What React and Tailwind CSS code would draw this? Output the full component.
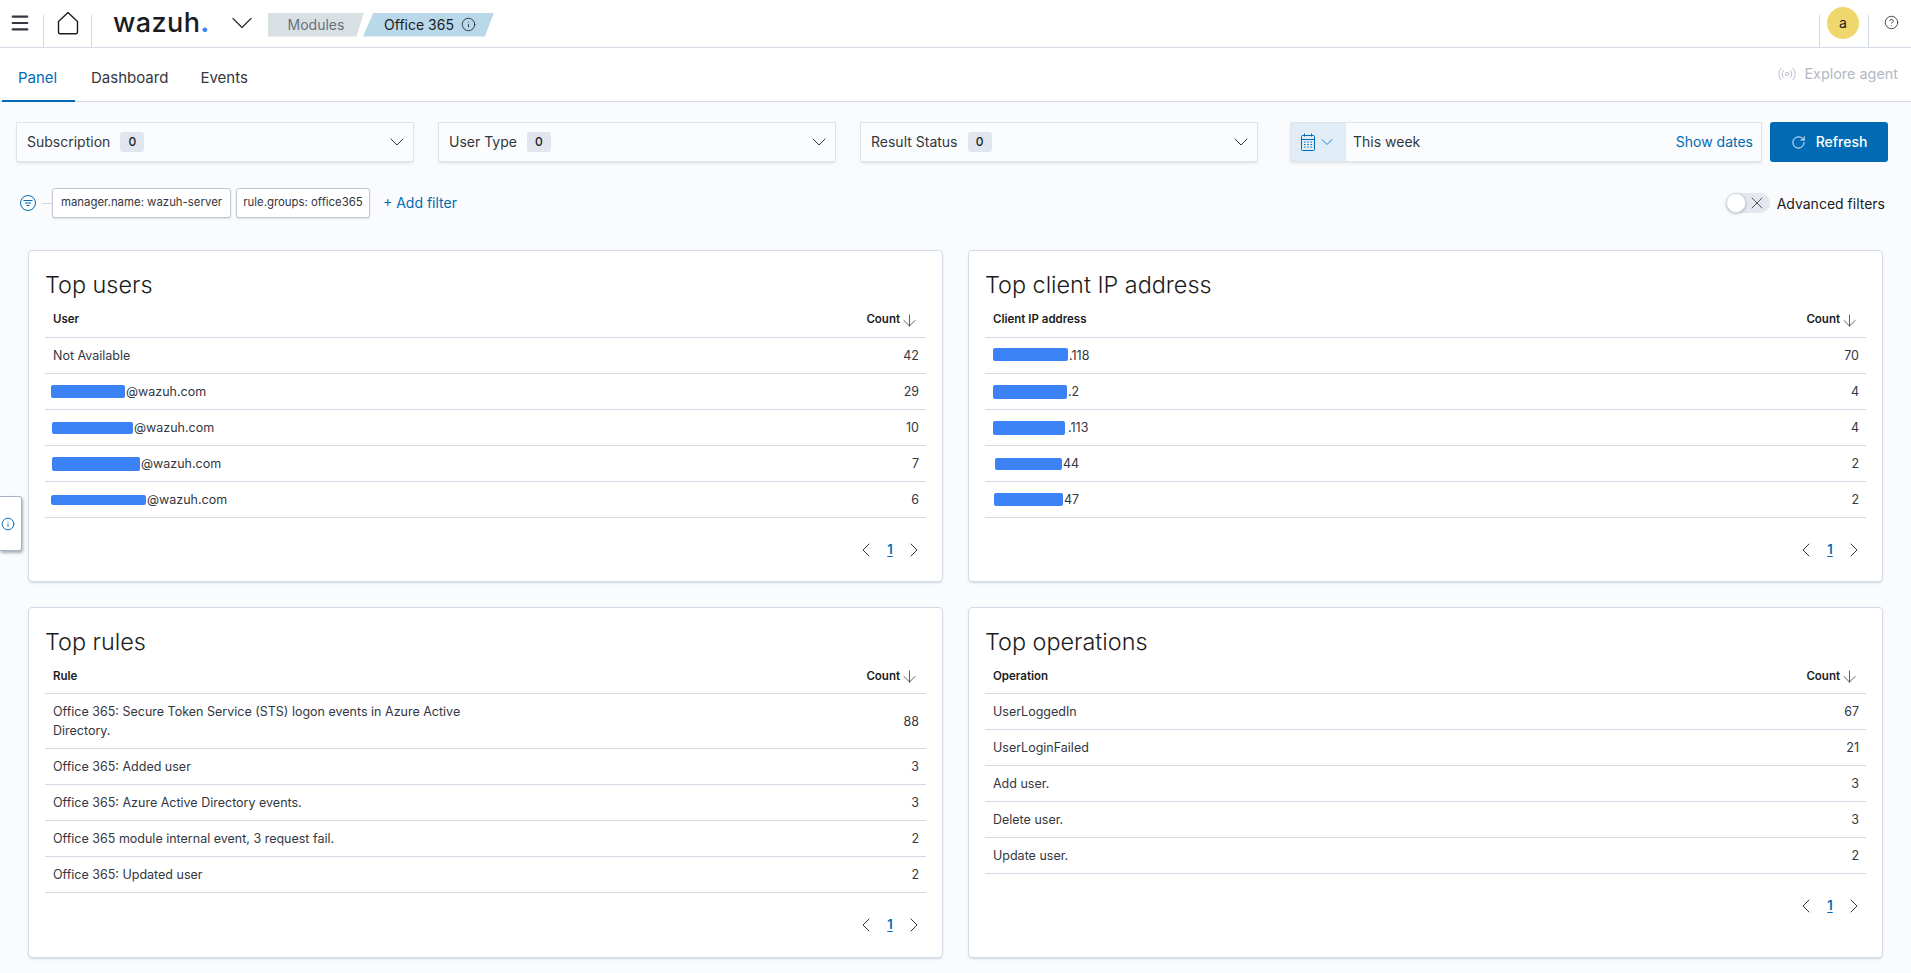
import { ArrowDown, ChevronDown, ChevronLeft, ChevronRight, CircleHelp, Info, Menu, Radio, RotateCw, X } from "lucide-react";

// panels data, bars hide the redacted part of each value
const panels = [
  [
    {
      title: "Top users",
      column: "User",
      rows: [
        { label: "Not Available", count: 42 },
        { bar: "w-[74px] h-[13px] -ml-[2px]", label: "@wazuh.com", count: 29 },
        { bar: "w-[81px] h-[12px] -ml-[1px]", label: "@wazuh.com", count: 10 },
        { bar: "w-[88px] h-[14px] -ml-[1px]", label: "@wazuh.com", count: 7 },
        { bar: "w-[95px] h-[10px] -ml-[2px]", label: "@wazuh.com", count: 6 },
      ],
    },
    {
      title: "Top client IP address",
      column: "Client IP address",
      rows: [
        { bar: "w-[75px] h-[13px] -translate-y-[1px]", label: ".118", count: 70 },
        { bar: "w-[74px] h-[14px]", label: ".2", count: 4 },
        { bar: "w-[72px] h-[14px]", label: ".113", pad: "ml-[3px]", count: 4 },
        { bar: "w-[67px] h-[12px] ml-[2px]", label: "44", count: 2 },
        { bar: "w-[69px] h-[13px] ml-[1px]", label: "47", count: 2 },
      ],
    },
  ],
  [
    {
      title: "Top rules",
      column: "Rule",
      compact: true,
      rows: [
        { label: "Office 365: Secure Token Service (STS) logon events in Azure Active Directory.", tall: true, count: 88 },
        { label: "Office 365: Added user", count: 3 },
        { label: "Office 365: Azure Active Directory events.", count: 3 },
        { label: "Office 365 module internal event, 3 request fail.", count: 2 },
        { label: "Office 365: Updated user", count: 2 },
      ],
    },
    {
      title: "Top operations",
      column: "Operation",
      compact: true,
      rows: [
        { label: "UserLoggedIn", count: 67 },
        { label: "UserLoginFailed", count: 21 },
        { label: "Add user.", count: 3 },
        { label: "Delete user.", count: 3 },
        { label: "Update user.", count: 2 },
      ],
    },
  ],
];

const Separator = () => <span className="self-end h-[32px] w-px bg-[#d3dae6]"></span>;

const HomeIcon = () => (
  <svg width="22" height="24" viewBox="0 0 22 24" fill="none" stroke="#1a1c21" strokeWidth="1.4">
    <path d="M1.5 10.5 11 1.5l9.5 9v10.8c0 .9-.6 1.4-1.5 1.4H3c-.9 0-1.5-.5-1.5-1.4z" strokeLinejoin="round" />
  </svg>
);

const CalendarIcon = () => (
  <svg width="14" height="18" viewBox="0 0 14 18" fill="none" stroke="#006bb4" strokeWidth="1">
    <rect x="0.5" y="2.5" width="13" height="15" rx="1" />
    <path d="M0.5 6.5h13M3.5 0.5v3M10.5 0.5v3" />
    <path d="M3 9h1.5M6.3 9h1.5M9.6 9h1.5M3 11.5h1.5M6.3 11.5h1.5M9.6 11.5h1.5M3 14h1.5M6.3 14h1.5M9.6 14h1.5" strokeWidth="1.2" />
  </svg>
);

const FilterIcon = () => (
  <svg width="16" height="16" viewBox="0 0 16 16" fill="none" stroke="#006bb4" strokeWidth="1">
    <circle cx="8" cy="8" r="7.5" />
    <path d="M3.5 5.5h9M5 8h6M6.5 10.5h3" />
  </svg>
);

const SelectBox = ({ label, width }) => (
  <div className={`${width} h-[40px] flex items-center pl-[10px] pr-[4px] bg-[#fbfcfd] border border-[#dfe3ea] shadow-[0_2px_3px_-1px_rgba(152,162,179,0.3)]`}>
    <span className="text-sm text-[#343741]">{label}</span>
    <span className="ml-[10px] w-[24px] h-[20px] rounded-[3px] bg-[#e0e5ee] flex items-center justify-center text-xs font-medium text-[#1a1c21]">0</span>
    <ChevronDown className="ml-auto text-[#343741]" size={24} strokeWidth={1} />
  </div>
);

const Pill = ({ children, width }) => (
  <span className={`${width} h-[30px] flex items-center justify-center bg-white border border-[#c2c8d3] rounded-[3px] text-[11.4px] text-[#343741] shadow-[0_1px_2px_rgba(152,162,179,0.35)]`}>
    {children}
  </span>
);

const Panel = ({ title, column, rows, compact }) => (
  <div className="bg-white border border-[#d3dae6] rounded-[4px] px-4 pt-[17px] shadow-[0_2px_2px_-1px_rgba(152,162,179,0.3),0_1px_5px_-2px_rgba(152,162,179,0.3)]">
    <h2 className="h-[34px] text-[23.4px] leading-[33px] font-light text-[#1a1c21]">{title}</h2>
    <div className={`${compact ? "h-[35px]" : "h-[36px]"} pt-[1px] flex items-center justify-between border-b border-[#d3dae6] pl-2 pr-[7px] text-[11.5px] font-semibold text-[#1a1c21]`}>
      <span>{column}</span>
      <span className="flex items-center">
        Count <ArrowDown size={19} strokeWidth={0.9} />
      </span>
    </div>
    {rows.map((row, index) => (
      <div key={index} className={`${row.tall ? "h-[55px]" : "h-[36px]"} flex items-center justify-between border-b border-[#d3dae6] pl-2 pr-[7px] text-[12.5px] leading-[19px] text-[#343741]`}>
        <span className={row.tall ? "w-[420px]" : "flex items-center"}>
          {row.bar && <span className={`${row.bar} inline-block rounded-[2px] bg-[#3b82f6]`}></span>}
          <span className={row.pad || (row.bar ? "ml-[1px]" : "")}>{row.label}</span>
        </span>
        <span>{row.count}</span>
      </div>
    ))}
    <div className={`mt-[20px] ${compact ? "mb-[20px]" : "mb-[19px]"} h-[24px] flex justify-end items-center text-[#343741]`}>
      <span className="w-[24px] flex justify-center"><ChevronLeft size={24} strokeWidth={1} /></span>
      <span className="w-[24px] flex justify-center text-[13px] font-semibold text-[#006bb4] underline underline-offset-2">1</span>
      <span className="w-[24px] flex justify-center"><ChevronRight size={24} strokeWidth={1} /></span>
    </div>
  </div>
);

export default function App() {
  return (
    <div className="relative min-h-[973px] bg-[#fafbfd] font-['Inter',sans-serif] overflow-hidden">
      {/* top bar */}
      <header className="h-[48px] flex items-center bg-white border-b border-[#d3dae6]">
        <div className="w-[43px] flex justify-center"><Menu size={22} strokeWidth={2.3} className="text-[#343741] -translate-y-[1px] -translate-x-[2px]" /></div>
        <Separator />
        <div className="w-[47px] flex justify-center -translate-y-[1px]"><HomeIcon /></div>
        <Separator />
        <div className="ml-[21px] w-[100px] text-[27px] leading-none font-medium tracking-[0.4px] text-[#1a1c21] -translate-y-[1px]">
          wazuh<span className="text-[#3d82f1] font-bold">.</span>
        </div>
        <ChevronDown className="ml-[11px] text-[#343741] -translate-y-[1px]" size={36} strokeWidth={0.9} />
        <div className="ml-[8px] flex h-[24px] text-sm translate-y-[1px]">
          <span className="w-[96px] flex items-center justify-center bg-[#d9e0e4] text-[#69707d] [clip-path:polygon(0_0,100%_0,92%_100%,0_100%)]">Modules</span>
          <span className="-ml-[1px] w-[131px] pl-[3px] flex items-center justify-center gap-[7px] bg-[#b9d8ea] text-[#1a1c21] [clip-path:polygon(8%_0,100%_0,93%_100%,0_100%)]">
            Office 365 <Info size={15} strokeWidth={1.3} />
          </span>
        </div>
        <div className="ml-auto flex items-center h-full">
          <Separator />
          <span className="mx-[8px] w-[32px] h-[32px] -translate-y-[1px] -translate-x-[1px] rounded-full bg-[#efd76c] flex items-center justify-center text-sm text-[#1a1c21]">a</span>
          <Separator />
          <span className="w-[42px] flex justify-center -translate-y-[1px] translate-x-[1px]"><CircleHelp size={15} strokeWidth={1.4} className="text-[#343741]" /></span>
        </div>
      </header>

      {/* tabs */}
      <nav className="h-[54px] flex items-stretch pl-[2px] bg-white border-b border-[#d3dae6]">
        <span className="w-[73px] pl-4 pt-[8px] flex items-center text-[15px] text-[#006bb4] border-b-2 border-[#006bb4] -mb-px">Panel</span>
        <span className="px-4 pt-[8px] flex items-center text-[15px] text-[#343741]">Dashboard</span>
        <span className="px-4 pt-[8px] flex items-center text-[15px] text-[#343741]">Events</span>
        <span className="ml-auto pr-[13px] flex items-center gap-[7px] text-[14.4px] text-[#b4b9c4] -translate-y-[1px]">
          <Radio size={20} strokeWidth={1.1} />
          Explore agent
        </span>
      </nav>

      {/* search bar */}
      <div className="mt-[20px] flex items-center pl-4 pr-[23px]">
        <div className="flex gap-[24px]">
          <SelectBox label="Subscription" width="w-[398px]" />
          <SelectBox label="User Type" width="w-[398px]" />
          <SelectBox label="Result Status" width="w-[398px]" />
        </div>
        <div className="ml-[32px] w-[472px] h-[40px] flex items-center bg-[#fbfcfd] border border-[#dfe3ea] shadow-[0_2px_3px_-1px_rgba(152,162,179,0.3)]">
          <span className="w-[55px] h-full flex items-center justify-center gap-[2px] bg-[#e0ecf6]">
            <CalendarIcon />
            <ChevronDown className="text-[#006bb4]" size={20} strokeWidth={1} />
          </span>
          <span className="ml-[7px] text-sm text-[#343741]">This week</span>
          <span className="ml-auto mr-[8px] text-sm text-[#006bb4]">Show dates</span>
        </div>
        <button className="ml-[8px] w-[118px] h-[40px] flex items-center justify-center gap-[10px] rounded-[3px] bg-[#006bb4] text-sm font-medium text-white">
          <RotateCw size={15} strokeWidth={1.5} />
          Refresh
        </button>
      </div>

      {/* filters */}
      <div className="mt-[26px] h-[30px] flex items-center pl-[20px] pr-[26px]">
        <FilterIcon />
        <span className="w-[10px] h-px ml-[6px] bg-[#d3dae6]"></span>
        <div className="flex gap-[5px]">
          <Pill width="w-[179px]">manager.name: wazuh-server</Pill>
          <Pill width="w-[134px]">rule.groups: office365</Pill>
        </div>
        <span className="ml-[13px] text-sm text-[#006bb4]">+ Add filter</span>
        <span className="ml-auto relative w-[44px] h-[20px] flex items-center justify-end pr-[3px] rounded-full bg-[#e4e7ed] text-[#343741]">
          <span className="absolute left-0 w-[20px] h-[20px] rounded-full bg-white border border-[#d3dae6] shadow-[0_1px_3px_rgba(0,0,0,0.25)]"></span>
          <X size={20} strokeWidth={1} />
        </span>
        <span className="ml-[7px] pt-[1px] text-sm text-[#1a1c21]">Advanced filters</span>
      </div>

      {/* panels */}
      <div className="mt-[32px] px-[28px] grid grid-cols-2 gap-[25px]">
        {panels.flat().map((panel) => (
          <Panel key={panel.title} {...panel} />
        ))}
      </div>

      {/* side info tab */}
      <div className="absolute left-0 top-[496px] w-[22px] h-[55px] flex items-center justify-end pr-[6px] bg-white border border-l-0 border-[#a9b3c4] rounded-r-[3px] shadow-[1px_2px_3px_rgba(90,100,120,0.5)]">
        <Info size={14} strokeWidth={1.6} className="text-[#006bb4]" />
      </div>
    </div>
  );
}
